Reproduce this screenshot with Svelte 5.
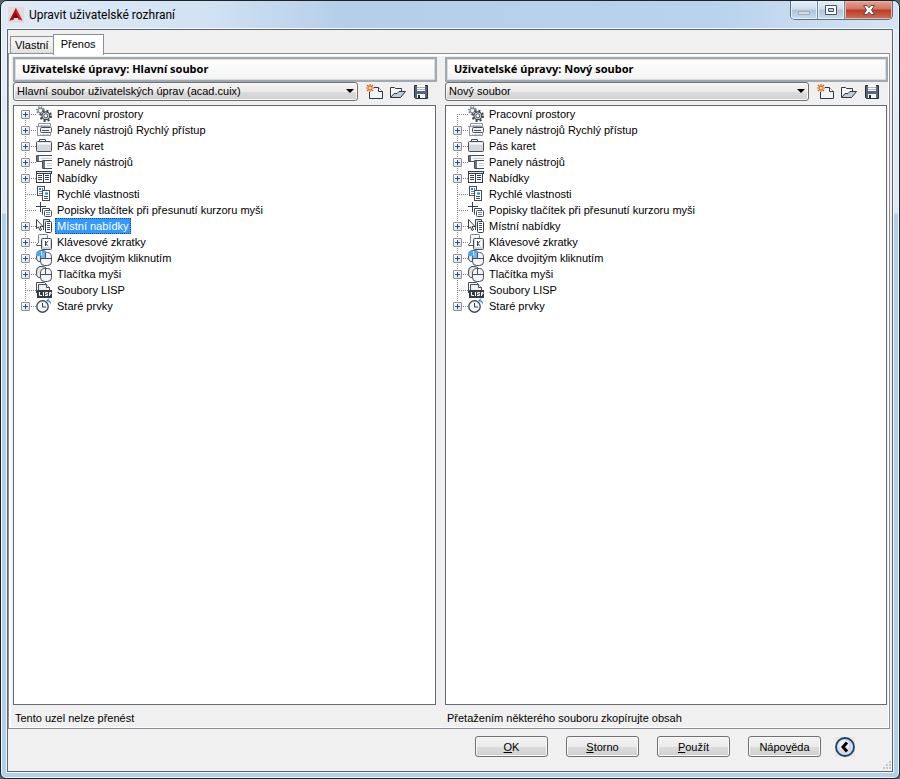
<script>
  const nodes = [
    { id: 'gears', label: 'Pracovní prostory', open: true },
    { id: 'quick', label: 'Panely nástrojů Rychlý přístup', open: true },
    { id: 'ribbon', label: 'Pás karet', open: true },
    { id: 'toolbars', label: 'Panely nástrojů', open: true },
    { id: 'menus', label: 'Nabídky', open: true },
    { id: 'props', label: 'Rychlé vlastnosti', open: false },
    { id: 'rollover', label: 'Popisky tlačítek při přesunutí kurzoru myši', open: false },
    { id: 'shortcut', label: 'Místní nabídky', open: true },
    { id: 'keys', label: 'Klávesové zkratky', open: true },
    { id: 'double', label: 'Akce dvojitým kliknutím', open: true },
    { id: 'mouse', label: 'Tlačítka myši', open: true },
    { id: 'lisp', label: 'Soubory LISP', open: false },
    { id: 'legacy', label: 'Staré prvky', open: true }
  ];

  let panes = $state([
    {
      id: 'main',
      title: 'Uživatelské úpravy: Hlavní soubor',
      file: 'Hlavní soubor uživatelských úprav (acad.cuix)',
      status: 'Tento uzel nelze přenést',
      selected: 'shortcut',
      leaf: ''
    },
    {
      id: 'new',
      title: 'Uživatelské úpravy: Nový soubor',
      file: 'Nový soubor',
      status: 'Přetažením některého souboru zkopírujte obsah',
      selected: '',
      leaf: 'gears'
    }
  ]);
</script>

{#snippet mouseShape()}
  <path d="M.5 5q0-4 3.500-4.500h3q3 0 3.500 3v8h-8q-2-1-2-3z" fill="#dfe3ea" stroke="#464d5b" />
  <path d="M4.500 7.500q0-5 4-5h3q4 0 4 5v4q0 4-4 4h-3q-4 0-4-4z" fill="#f4f5f8" stroke="#464d5b" />
  <path d="M4.500 8.500h11M9.500 3v5" fill="none" stroke="#464d5b" />
{/snippet}

{#snippet icon(id)}
  <svg class="icon" width="16" height="16" viewBox="0 0 16 16" aria-hidden="true">
    {#if id === 'gears'}
      <circle cx="4.500" cy="4.500" r="3.600" fill="none" stroke="#7b818d" stroke-width="1.600" stroke-dasharray="1.414 1.413" />
      <circle cx="4.500" cy="4.500" r="2.400" fill="#f1f2f5" stroke="#7b818d" stroke-width="1.200" />
      <circle cx="9.800" cy="9.800" r="5.200" fill="#fff" stroke="#3f4654" stroke-width="2" stroke-dasharray="2.042 2.042" />
      <circle cx="9.800" cy="9.800" r="3.900" fill="#dfe2e8" stroke="#3f4654" stroke-width="1.200" />
      <circle cx="9.800" cy="9.800" r="2" fill="#fff" stroke="#3f4654" />
    {:else if id === 'quick'}
      <path d="M2.500 5V1.500h12V5" fill="#fff" stroke="#8d95a2" />
      <path d="M4 3.500h9" stroke="#c6cbd3" />
      <path d="M0 4.500h15M1.500 5v8.500h13V11" fill="none" stroke="#8d95a2" />
      <rect x="4.500" y="5.500" width="11" height="5" rx="1" fill="#f4f5f8" stroke="#464d5b" />
      <path d="M6 8.500h7" stroke="#464d5b" />
      <path d="M4 12.500h9" stroke="#c6cbd3" />
    {:else if id === 'ribbon'}
      <path d="M3.500 4V1.500h6V4" fill="#f4f5f8" stroke="#464d5b" />
      <rect x=".5" y="3.500" width="15" height="10" rx="1" fill="#d3d8e0" stroke="#464d5b" />
      <path d="M1 5.500h14" stroke="#f7f8fa" stroke-width="2" />
    {:else if id === 'toolbars'}
      <path d="M16 1.500H.5v6H6" fill="#f4f5f8" stroke="#464d5b" />
      <rect x="1" y="2" width="2" height="5" fill="#6b7280" />
      <path d="M5 4.500h11" stroke="#c6cbd3" />
      <path d="M16 6.500H6.500v8H16" fill="#fff" stroke="#464d5b" />
      <rect x="7" y="7" width="2" height="7" fill="#6b7280" />
      <path d="M11 9.500h5M11 11.500h5" stroke="#c6cbd3" />
    {:else if id === 'menus'}
      <rect x=".5" y="1.500" width="15" height="2" fill="#dfe3ea" stroke="#343b49" />
      <rect x=".5" y="3.500" width="7" height="9" fill="#fff" stroke="#343b49" />
      <rect x="7.500" y="3.500" width="7" height="9" fill="#fff" stroke="#343b49" />
      <path d="M2 5.500h4M2 7.500h4M2 9.500h4M9 5.500h4M9 7.500h4M9 9.500h4" stroke="#343b49" />
    {:else if id === 'props'}
      <rect x="1.500" y=".5" width="7" height="9" fill="#fff" stroke="#464d5b" />
      <path d="M3 3h2M6 3h1" stroke="#1684d9" stroke-width="2" />
      <path d="M3 5.500h4M3 7.500h3" stroke="#7b818d" />
      <rect x="6.500" y="4.500" width="7" height="10" fill="#fff" stroke="#464d5b" />
      <path d="M9 7.500h3" stroke="#1684d9" stroke-width="2" />
      <path d="M8 10.500h4M8 12.500h4" stroke="#464d5b" />
    {:else if id === 'rollover'}
      <path d="M4.500 0v10M0 4.500h10" stroke="#343b49" />
      <path d="M6.500 12.500v-6h7V8" fill="#fff" stroke="#464d5b" />
      <rect x="8.500" y="8.500" width="7" height="6" rx="1" fill="#fff" stroke="#464d5b" />
      <path d="M10 10.500h4M10 12.500h4" stroke="#7b818d" />
    {:else if id === 'shortcut'}
      <path d="M7.500 12V1.500h6V3" fill="#dfe3ea" stroke="#464d5b" />
      <rect x="9.500" y="3.500" width="6" height="11" rx="1" fill="#fff" stroke="#343b49" />
      <path d="M11 5.500h3M11 7.500h3M11 9.500h3M11 11.500h3" stroke="#464d5b" />
      <path d="M.5 1.500v9l2-1.500 1.500 3.500 1.500-.7L4 8.500h3z" fill="#fff" stroke="#343b49" />
    {:else if id === 'keys'}
      <path d="M2.500 9V1.500q0-1 1-1h7q1 0 1 1V5" fill="#f4f5f8" stroke="#7b818d" />
      <path d="M2.500 8.500l-2 2v1h5" fill="none" stroke="#464d5b" />
      <rect x="5.500" y="4.500" width="10" height="11" rx="1" fill="#d3d8e0" stroke="#464d5b" />
      <rect x="7" y="5" width="7" height="8" rx="1" fill="#fff" />
      <path d="M9.500 7v5M12.300 7L9.700 9.500l2.600 2.500" fill="none" stroke="#343b49" />
    {:else if id === 'double'}
      {@render mouseShape()}
      <path d="M0 5.500Q0 1 4 .5h3.500Q10.500.5 11 3 6 2 5 6H0z" fill="#4ba9ea" />
      <path d="M5.500 1v4" stroke="#d9efff" />
      <path d="M5 8q0-5 4-5v5z" fill="#69bbf2" />
    {:else if id === 'mouse'}
      {@render mouseShape()}
    {:else if id === 'lisp'}
      <path d="M.5 11V.5h8l2 2" fill="#fff" stroke="#464d5b" />
      <path d="M2.500 10V2.500h8l3 3V8" fill="#eef0f4" stroke="#464d5b" />
      <path d="M10.500 2.500v3h3" fill="#fff" stroke="#464d5b" />
      <rect x="1" y="8" width="15" height="8" fill="#343b49" />
      <path d="M3.500 10v3.500H6M7.500 10v4M12 10.500H9.500v1.500h2v1.500H9M13.500 14v-3.500h1.500v1.500h-1.500" fill="none" stroke="#fff" />
    {:else if id === 'legacy'}
      <circle cx="6.500" cy="8.500" r="5.700" fill="#f4f5f8" stroke="#464d5b" stroke-width="1.400" />
      <path d="M6.500 5v4H10" fill="none" stroke="#343b49" />
      <path d="M11 2.500h1.500q2 .5 2 3M13 .5l-2 2 2 2" fill="none" stroke="#1277cf" />
    {/if}
  </svg>
{/snippet}

<div class="window">
  <header class="titlebar">
    <svg class="logo" width="16" height="16" viewBox="0 0 16 16" aria-hidden="true">
      <rect width="16" height="16" fill="#e3dadd" />
      <path d="M8 1l6.500 12.500-4.500-1L8 8l-2 4.500-4.500 1z" fill="#d02028" />
      <path d="M8 1L1.500 13.500l4.500-1L8 8z" fill="#ab1018" />
      <path d="M8 6l3 5H5z" fill="#7a0c12" />
      <path d="M6 11h4l.5 1.500h-5z" fill="#e9e1e3" />
    </svg>
    <h1>Upravit uživatelské rozhraní</h1>
    <div class="caption">
      <button class="min" aria-label="Minimalizovat">
        <svg width="14" height="12" viewBox="0 0 14 12"><rect x="1.500" y="7.500" width="11" height="3" fill="#d3dbe4" stroke="#a3adba" /></svg>
      </button>
      <button class="max" aria-label="Maximalizovat">
        <svg width="14" height="12" viewBox="0 0 14 12"><path d="M1.500 1.500h11v9h-11zM4.500 4.500v3h5v-3z" fill="#fff" fill-rule="evenodd" stroke="#46536b" /></svg>
      </button>
      <button class="close" aria-label="Zavřít">
        <svg width="14" height="12" viewBox="0 0 14 12"><path d="M1.500 1.500H5l2 2.300 2-2.300h3.500L9.500 6l3 4.500H9L7 8.200 5 10.500H1.500l3-4.500z" fill="#fff" stroke="#5b4a56" /></svg>
      </button>
    </div>
  </header>

  <main class="client">
    <div class="tabs" role="tablist">
      <button class="tab" role="tab" aria-selected="false">Vlastní</button>
      <button class="tab active" role="tab" aria-selected="true">Přenos</button>
    </div>

    <div class="page">
      <div class="panes">
        {#each panes as pane (pane.id)}
          <section class="pane">
            <h2>{pane.title}</h2>
            <div class="filebar">
              <div class="combo">
                <select aria-label={pane.title}>
                  <option>{pane.file}</option>
                </select>
              </div>
              <button class="tool" aria-label="Nový">
                <svg width="18" height="16" viewBox="0 0 18 16">
                  <path d="M3.500 8v6.500h13V7.500l-4-4H8" fill="#f1f3f7" stroke="#2f3644" />
                  <path d="M12.500 3.500v4h4" fill="#fff" stroke="#2f3644" />
                  <path d="M4 0v8M0 4h8M1 1l6 6M7 1L1 7" stroke="#e85412" stroke-width="1.200" />
                  <circle cx="4" cy="4" r="1.500" fill="#fff27a" />
                </svg>
              </button>
              <button class="tool" aria-label="Otevřít">
                <svg width="18" height="16" viewBox="0 0 18 16">
                  <path d="M1.500 13V3.500h4l1 1h6v3" fill="#f7f8fa" stroke="#2f3644" />
                  <path d="M1.500 13.500l3.500-4h3l2-2h6.500l-5 6z" fill="#c3cad6" stroke="#2f3644" />
                </svg>
              </button>
              <button class="tool" aria-label="Uložit">
                <svg width="18" height="16" viewBox="0 0 18 16">
                  <path d="M2.500 1.500h13v13h-12l-1-1z" fill="#59657a" stroke="#272e3b" />
                  <rect x="5" y="1" width="8" height="6" fill="#fff" />
                  <path d="M5 3.500h8M5 5.500h8" stroke="#aab2bf" />
                  <rect x="5" y="10" width="8" height="4" fill="#f4f5f8" />
                  <path d="M7 11v3" stroke="#272e3b" stroke-width="2" />
                </svg>
              </button>
            </div>
            <ul class="tree" role="tree" aria-label={pane.title}>
              {#each nodes as node (node.id)}
                <li role="none">
                  <span class="branch">
                    {#if node.open && node.id !== pane.leaf}
                      <button class="toggle" aria-label="Rozbalit {node.label}"></button>
                    {/if}
                  </span>
                  {@render icon(node.id)}
                  <button
                    class="label"
                    class:selected={pane.selected === node.id}
                    role="treeitem"
                    aria-selected={pane.selected === node.id}
                    onclick={() => (pane.selected = node.id)}>{node.label}</button>
                </li>
              {/each}
            </ul>
            <p>{pane.status}</p>
          </section>
        {/each}
      </div>
    </div>

    <footer>
      <div class="actions">
        <button><u>O</u>K</button>
        <button><u>S</u>torno</button>
        <button><u>P</u>oužít</button>
        <button>Nápo<u>v</u>ěda</button>
      </div>
      <button class="collapse" aria-label="Sbalit">
        <svg width="20" height="20" viewBox="0 0 20 20">
          <rect width="20" height="20" fill="#ece9d8" />
          <circle cx="10" cy="10" r="9" fill="#d5d9e8" stroke="#16426f" stroke-width="1.800" />
          <circle cx="9" cy="8" r="5" fill="#eef0f8" />
          <path d="M12 5.500L8 10l4 4.500" fill="none" stroke="#000" stroke-width="3" />
        </svg>
      </button>
      <svg class="grip" width="9" height="9" viewBox="0 0 9 9" aria-hidden="true">
        <path d="M7 1h2M4 4h2M7 4h2M1 7h2M4 7h2M7 7h2" stroke="#c8c8c8" stroke-width="2" />
      </svg>
    </footer>
  </main>
</div>

<style>
  :global(body) {
    margin: 0;
    background: #59616a;
  }

  .window,
  .window * {
    box-sizing: border-box;
  }

  .window {
    display: flex;
    flex-direction: column;
    min-height: 100vh;
    padding: 0 6px 6px;
    border: 1px solid #1d232b;
    border-radius: 7px 7px 6px 6px;
    background: linear-gradient(#e4eefa 0, #dbe9f6 212px, #b3d0ea 213px);
    box-shadow: inset 0 0 0 1px #eef6fc;
    font: 11px/16px "Liberation Sans", Arial, sans-serif;
    color: #000;
  }

  button {
    margin: 0;
    padding: 0;
    border: 0;
    background: none;
    font: inherit;
    color: inherit;
  }

  svg {
    display: block;
  }

  .titlebar {
    display: flex;
    align-items: flex-start;
    height: 28px;
    margin: 0 -5px;
    padding: 0 5px 0 6px;
    border-radius: 6px 6px 0 0;
    background: linear-gradient(90deg, #dfeaf6 0, #d3e3f3 22%, #b5cfe9 38%, #b9d3ec 80%, #d5e5f5 100%);
  }

  .logo {
    margin-top: 6px;
  }

  h1 {
    flex: 1;
    margin: 5px 0 0 5px;
    font: 12px/18px Roboto, "Open Sans", sans-serif;
  }

  .caption {
    display: flex;
    border: 1px solid #5d6f85;
    border-top: 0;
    border-radius: 0 0 5px 5px;
    overflow: hidden;
  }

  .caption button {
    display: flex;
    align-items: center;
    justify-content: center;
    width: 27px;
    height: 18px;
    border-right: 1px solid #74869c;
    background: linear-gradient(#e3edf7 0, #cfdeed 45%, #b0c5dc 50%, #c9dcef 100%);
    box-shadow: inset 0 0 0 1px #e7f1fa;
  }

  .caption .close {
    width: 47px;
    border: 0;
    background: linear-gradient(#e5a596 0, #d3735f 45%, #bb3a22 50%, #d0705a 100%);
    box-shadow: inset 0 0 0 1px #eab5a8;
  }

  .client {
    flex: 1;
    display: flex;
    flex-direction: column;
    border: 1px solid #5c656f;
    outline: 1px solid #f4f9fd;
    background: #f0f0f0;
  }

  .tabs {
    display: flex;
    align-items: flex-end;
    height: 24px;
    padding: 3px 2px 0;
  }

  .tab {
    height: 18px;
    padding: 0 4px 1px;
    border: 1px solid #8b8f98;
    border-width: 1px 0 0 1px;
    background: linear-gradient(#f2f2f2 45%, #dcdcdc);
  }

  .active {
    position: relative;
    height: 21px;
    margin-bottom: -1px;
    padding: 0 7px 3px;
    border-width: 1px 1px 0;
    background: #fff;
  }

  .page {
    flex: 1;
    display: flex;
    padding: 2px 1px 1px 2px;
    margin: -1px 2px 0 0;
    border: 1px solid #8b8f98;
    background: #fff;
  }

  .panes {
    flex: 1;
    display: grid;
    grid-template-columns: 424fr 443fr;
    gap: 8px;
    padding: 1px 0 0 2px;
    background: #f0f0f0;
  }

  .pane {
    display: flex;
    flex-direction: column;
    min-width: 0;
  }

  h2 {
    height: 25px;
    margin: 0;
    padding: 0 7px;
    border: 2px solid #a0a8b0;
    box-shadow: inset 0 0 0 1px #d8dde2;
    background: linear-gradient(#fff, #f3f3f3);
    font: bold 11px/20px "Noto Sans", "Open Sans", sans-serif;
  }

  .filebar {
    display: flex;
    align-items: center;
    gap: 5px;
    height: 23px;
    padding: 0 7px 3px 0;
  }

  .combo {
    position: relative;
    flex: 1;
    align-self: flex-start;
    margin-right: 3px;
  }

  .combo::after {
    content: "";
    position: absolute;
    top: 7px;
    right: 4px;
    border: 4px solid transparent;
    border-top-color: #000;
    border-bottom: 0;
    pointer-events: none;
  }

  select {
    appearance: none;
    display: block;
    width: 100%;
    height: 19px;
    padding: 0 18px 2px 3px;
    border: 1px solid #707070;
    border-radius: 3px;
    background: linear-gradient(#f4f4f4, #ebebeb 50%, #dcdcdc 51%, #d0d0d0);
    box-shadow: inset 0 0 0 1px #f8f8f8;
    font: inherit;
    color: inherit;
  }

  .tree {
    flex: 1;
    margin: 0 1px 0 0;
    padding: 0 0 0 7px;
    border: 1px solid #646a70;
    background: #fff;
    list-style: none;
  }

  li {
    display: flex;
    align-items: center;
    height: 16px;
  }

  .branch {
    position: relative;
    width: 15px;
    height: 16px;
    background:
      repeating-linear-gradient(90deg, #808080 0 1px, transparent 1px 2px) 4px 8px / 11px 1px no-repeat,
      repeating-linear-gradient(#808080 0 1px, transparent 1px 2px) 4px 0 / 1px 16px no-repeat;
  }

  li:first-child .branch {
    background-position: 4px 8px, 4px 8px;
  }

  li:last-child .branch {
    background-size: 11px 1px, 1px 8px;
  }

  .toggle {
    display: block;
    width: 9px;
    height: 9px;
    margin-top: 4px;
    border: 1px solid #919191;
    border-radius: 1px;
    background:
      linear-gradient(#2a4c9c, #2a4c9c) 1px 3px / 5px 1px no-repeat,
      linear-gradient(#2a4c9c, #2a4c9c) 3px 1px / 1px 5px no-repeat,
      linear-gradient(135deg, #fff, #dcdcdc);
  }

  .label {
    height: 16px;
    margin-left: 3px;
    padding: 0 1px;
    border: 1px solid transparent;
    line-height: 14px;
    white-space: nowrap;
  }

  .selected {
    border: 1px dotted #1d4f86;
    background: #3399ff;
    color: #fff;
  }

  p {
    margin: 0;
    padding: 5px 2px 1px;
  }

  footer {
    position: relative;
    display: flex;
    align-items: center;
    justify-content: flex-end;
    gap: 14px;
    height: 42px;
    padding: 0 37px 7px 0;
  }

  .actions {
    display: flex;
    gap: 18px;
  }

  .actions button {
    width: 73px;
    height: 21px;
    border: 1px solid #707070;
    border-radius: 3px;
    background: linear-gradient(#f4f4f4, #ebebeb 50%, #dddddd 51%, #cfcfcf);
    box-shadow: inset 0 0 0 1px #fafafa;
  }

  .grip {
    position: absolute;
    right: 1px;
    bottom: 1px;
  }
</style>
